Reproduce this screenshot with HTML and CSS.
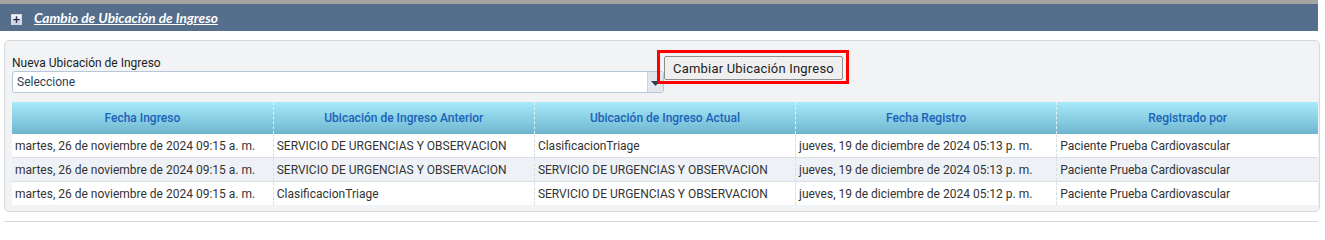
FILE: index.html
```html
<!DOCTYPE html>
<html lang="es">
<head>
<meta charset="utf-8">
<title>Cambio de Ubicación de Ingreso</title>
<link rel="stylesheet" href="styles.css">
</head>
<body>
<div class="page">
  <div class="topbar"></div>
  <div class="header">
    <span class="toggle">+</span>
    <a class="title" href="#">Cambio de Ubicación de Ingreso</a>
  </div>
  <div class="panel">
    <div class="form-row">
      <div class="field">
        <label class="label">Nueva Ubicación de Ingreso</label>
        <div class="select">
          <span class="select-text">Seleccione</span>
          <span class="select-arrow"><svg width="9" height="5" viewBox="0 0 9 5"><path d="M0 0h9L4.5 5z" fill="#2c3e55"/></svg></span>
        </div>
      </div>
      <div class="btn-wrap">
        <button class="btn">Cambiar Ubicación Ingreso</button>
      </div>
    </div>
    <table class="grid">
      <thead>
        <tr>
          <th>Fecha Ingreso</th>
          <th>Ubicación de Ingreso Anterior</th>
          <th>Ubicación de Ingreso Actual</th>
          <th>Fecha Registro</th>
          <th>Registrado por</th>
        </tr>
      </thead>
      <tbody>
        <tr>
          <td>martes, 26 de noviembre de 2024 09:15 a. m.</td>
          <td>SERVICIO DE URGENCIAS Y OBSERVACION</td>
          <td>ClasificacionTriage</td>
          <td>jueves, 19 de diciembre de 2024 05:13 p. m.</td>
          <td>Paciente Prueba Cardiovascular</td>
        </tr>
        <tr class="alt">
          <td>martes, 26 de noviembre de 2024 09:15 a. m.</td>
          <td>SERVICIO DE URGENCIAS Y OBSERVACION</td>
          <td>SERVICIO DE URGENCIAS Y OBSERVACION</td>
          <td>jueves, 19 de diciembre de 2024 05:13 p. m.</td>
          <td>Paciente Prueba Cardiovascular</td>
        </tr>
        <tr>
          <td>martes, 26 de noviembre de 2024 09:15 a. m.</td>
          <td>ClasificacionTriage</td>
          <td>SERVICIO DE URGENCIAS Y OBSERVACION</td>
          <td>jueves, 19 de diciembre de 2024 05:12 p. m.</td>
          <td>Paciente Prueba Cardiovascular</td>
        </tr>
      </tbody>
    </table>
  </div>
  <div class="footer-line"></div>
</div>
</body>
</html>
```
FILE: styles.css
```css
html, body {
  margin: 0;
  padding: 0;
  background: #ffffff;
}
body {
  font-family: Roboto, "Liberation Sans", Arial, sans-serif;
  font-size: 12px;
  color: #333;
}
.page {
  width: 1318px;
}
.topbar {
  height: 4px;
  background: #a3a3a3;
}
.header {
  height: 27px;
  background: #546e8c;
  display: flex;
  align-items: center;
  padding-left: 11px;
  gap: 12px;
}
.toggle {
  width: 9px;
  height: 9px;
  border: 1px solid #d0d8e4;
  background: linear-gradient(#f4f6fa, #c8d2e0);
  color: #223;
  font-family: "DejaVu Sans", sans-serif;
  font-size: 10px;
  font-weight: bold;
  line-height: 9px;
  text-align: center;
  margin-top: 3px;
}
.title {
  color: #ffffff;
  font-family: Lato, "DejaVu Sans Condensed", sans-serif;
  font-style: italic;
  font-weight: bold;
  font-size: 13.7px;
  text-decoration: underline;
}
.panel {
  margin: 9px 0 0 4px;
  width: 1316px;
  box-sizing: border-box;
  height: 172px;
  border: 1px solid #d6d9dc;
  border-radius: 5px;
  background: #f1f3f5;
  padding: 9px 0 0 7px;
}
.form-row {
  display: flex;
  align-items: flex-start;
  height: 52px;
}
.field {
  padding-top: 6px;
}
.label {
  display: block;
  font-size: 12px;
  color: #1e1e1e;
  line-height: 14px;
  height: 15px;
}
.select {
  width: 652px;
  height: 22px;
  box-sizing: border-box;
  border: 1px solid #b7c6d8;
  border-radius: 3px;
  background: #fff;
  display: flex;
  align-items: center;
  justify-content: space-between;
}
.select-text {
  padding-left: 4px;
  color: #2a3f5a;
  font-size: 12px;
}
.select-arrow {
  width: 16px;
  height: 20px;
  background: #e3e8ee;
  border-left: 1px solid #c9d3de;
  display: flex;
  align-items: center;
  justify-content: center;
  padding-top: 2px;
  box-sizing: border-box;
}
.btn-wrap {
  margin-left: -7px;
  border: 3px solid #ff0000;
  padding: 3px 3px 1px 4px;
}
.btn {
  font-family: Roboto, "Liberation Sans", sans-serif;
  font-size: 13px;
  color: #222;
  background: #efefef;
  border: 1px solid #8e8e8e;
  border-radius: 2px;
  height: 24px;
  padding: 0 8px;
  letter-spacing: 0.2px;
}
.grid {
  border-collapse: collapse;
  width: 1306px;
  table-layout: fixed;
}
.grid th {
  height: 32px;
  background: linear-gradient(#a9e9fa, #6db6cf);
  color: #1b63b9;
  font-weight: 500;
  font-size: 12px;
  text-align: center;
  padding: 0;
  border-left: 1px dashed #e4eef3;
}
.grid th:first-child, .grid td:first-child {
  border-left: none;
}
.grid td {
  height: 23px;
  padding: 0 0 0 3px;
  background: #ffffff;
  color: #333;
  border-top: 1px solid #dcdfe2;
  border-left: 1px dashed #dcdfe2;
  white-space: nowrap;
  overflow: hidden;
}
.grid tr.alt td {
  background: #eef2f7;
}
.grid tbody tr:first-child td {
  border-top: none;
}
.footer-line {
  margin: 9px 0 0 4px;
  height: 1px;
  background: #d6d9dc;
}
```
